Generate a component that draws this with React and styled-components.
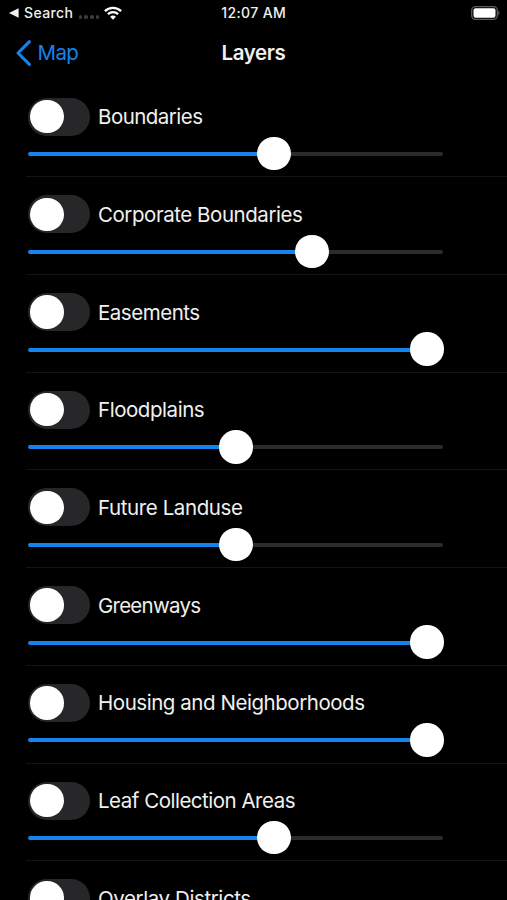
import React from 'react'
import styled, {createGlobalStyle} from 'styled-components'

// value is the thumb center, measured along the track in px
const layers = [
  {name: 'Boundaries', value: 246, spacing: -0.53},
  {name: 'Corporate Boundaries', value: 284, spacing: -0.45},
  {name: 'Easements', value: 399, spacing: -0.48},
  {name: 'Floodplains', value: 208, spacing: -0.45},
  {name: 'Future Landuse', value: 208, spacing: -0.4},
  {name: 'Greenways', value: 399, spacing: -0.75},
  {name: 'Housing and Neighborhoods', value: 399, spacing: -0.45},
  {name: 'Leaf Collection Areas', value: 246, spacing: -0.49},
  {name: 'Overlay Districts', value: 246, spacing: -0.4},
]

const StatusBar = () => {
  return (
    <StatusContainer>
      <StatusSide>
        <svg width="10" height="10" viewBox="0 0 10 10">
          <path d="M0 5 9.6 0.3V9.7Z" fill="#f2f2f2" />
        </svg>
        <BackApp>Search</BackApp>
        <Signal>
          <i />
          <i />
          <i />
          <i />
        </Signal>
        <svg width="18" height="14" viewBox="0 0 18 14">
          <g fill="none" stroke="#fff" strokeWidth="2.3">
            <path d="M0.9 5.1A11.6 11.6 0 0 1 17.1 5.1" />
            <path d="M3.9 8.1A7.4 7.4 0 0 1 14.1 8.1" />
          </g>
          <path d="M9 13.8 6.1 10.8A4.2 4.2 0 0 1 11.9 10.8Z" fill="#fff" />
        </svg>
      </StatusSide>
      <Clock>12:07 AM</Clock>
      <StatusSide $end>
        <svg width="29" height="14" viewBox="0 0 29 14">
          <rect x="0.7" y="0.7" width="25.6" height="12.6" rx="3.8" fill="none" stroke="#5c5c5c" strokeWidth="1.3" />
          <rect x="2.5" y="2.3" width="22" height="9.4" rx="2" fill="#fff" />
          <path d="M27.3 4.7C28.8 5.2 28.8 8.8 27.3 9.3Z" fill="#6a6a6a" />
        </svg>
      </StatusSide>
    </StatusContainer>
  )
}

const Navbar = () => {
  return (
    <NavContainer>
      <BackLink>
        <svg width="16" height="26" viewBox="0 0 16 26">
          <path d="M14.4 1.6 3 13 14.4 24.4" fill="none" stroke="#1583ee" strokeWidth="3" strokeLinecap="round" strokeLinejoin="round" />
        </svg>
        <span>Map</span>
      </BackLink>
      <Title>Layers</Title>
      <div />
    </NavContainer>
  )
}

const LayerRow = ({name, value, spacing}) => {
  return (
    <Row>
      <RowHead>
        <Toggle role="switch" aria-checked="false">
          <Knob />
        </Toggle>
        <Label $spacing={spacing}>{name}</Label>
      </RowHead>
      <Slider>
        <Fill style={{width: value}} />
        <Thumb />
        <Rest />
      </Slider>
    </Row>
  )
}

const App = () => {
  return (
    <Screen>
      <GlobalStyle />
      <StatusBar />
      <Navbar />
      {layers.map((layer) => (
        <LayerRow key={layer.name} {...layer} />
      ))}
    </Screen>
  )
}

export default App

const GlobalStyle = createGlobalStyle`
  * {
    box-sizing: border-box;
  }

  body {
    margin: 0;
    background: #000;
    color: #f0f0f0;
    font-family: Inter, 'Liberation Sans', sans-serif;
  }
`

const Screen = styled.div`
  width: 507px;
  height: 900px;
  overflow: hidden;
  background: #000;
`

//STATUS BAR
const StatusContainer = styled.header`
  display: grid;
  grid-template-columns: 1fr auto 1fr;
  align-items: center;
  height: 26px;
  padding: 0 7px 0 9px;
`

const StatusSide = styled.div`
  display: flex;
  align-items: center;
  justify-content: ${(props) => (props.$end ? 'flex-end' : 'flex-start')};
`

const BackApp = styled.span`
  width: 50px;
  margin-left: 5px;
  font-size: 14px;
  font-weight: 500;
  line-height: 26px;
  letter-spacing: 0.4px;
`

const Signal = styled.div`
  display: flex;
  gap: 2.3px;
  margin: 8px 5px 0 4.5px;

  i {
    width: 3.5px;
    height: 3.5px;
    border-radius: 50%;
    background: #3c3c3c;
  }
`

const Clock = styled.span`
  margin-right: 1.5px;
  font-size: 14px;
  font-weight: 500;
  line-height: 26px;
  letter-spacing: 0.4px;
`

//NAVBAR
const NavContainer = styled.nav`
  display: grid;
  grid-template-columns: 1fr auto 1fr;
  align-items: center;
  height: 53.6px;
  padding: 0 15px;
`

const BackLink = styled.div`
  display: flex;
  align-items: center;
  gap: 6.5px;
  color: #1583ee;
  font-size: 20.5px;
  letter-spacing: -0.6px;
`

const Title = styled.h1`
  margin: 0;
  font-size: 20.5px;
  font-weight: 600;
  letter-spacing: -0.4px;
`

//LAYER ROW
const Row = styled.section`
  height: 97.71px;
  margin-left: 26px;
  padding: 18px 64px 0 2px;
  border-bottom: 1px solid #141414;
`

const RowHead = styled.div`
  display: flex;
  align-items: center;
  height: 38px;
`

const Toggle = styled.div`
  display: flex;
  align-items: center;
  width: 62px;
  height: 38px;
  padding-left: 2px;
  border-radius: 19px;
  background: #272729;
`

const Knob = styled.div`
  width: 33.5px;
  height: 33.5px;
  border-radius: 50%;
  background: #fff;
`

const Label = styled.span`
  margin-left: 8px;
  font-size: 20.5px;
  white-space: nowrap;
  letter-spacing: ${(props) => props.$spacing}px;
`

const Slider = styled.div`
  display: flex;
  align-items: center;
  width: 415px;
  height: 33.5px;
  margin-top: 1.3px;
`

const Fill = styled.div`
  height: 4px;
  margin-top: 1px;
  border-radius: 2px 0 0 2px;
  background: #1583ee;
`

const Thumb = styled.div`
  flex: none;
  z-index: 1;
  width: 33.5px;
  height: 33.5px;
  margin: 0 -16.75px;
  border-radius: 50%;
  background: #fff;
`

const Rest = styled.div`
  flex: 1;
  height: 4px;
  margin-top: 1px;
  border-radius: 0 2px 2px 0;
  background: #2b2b2b;
`
